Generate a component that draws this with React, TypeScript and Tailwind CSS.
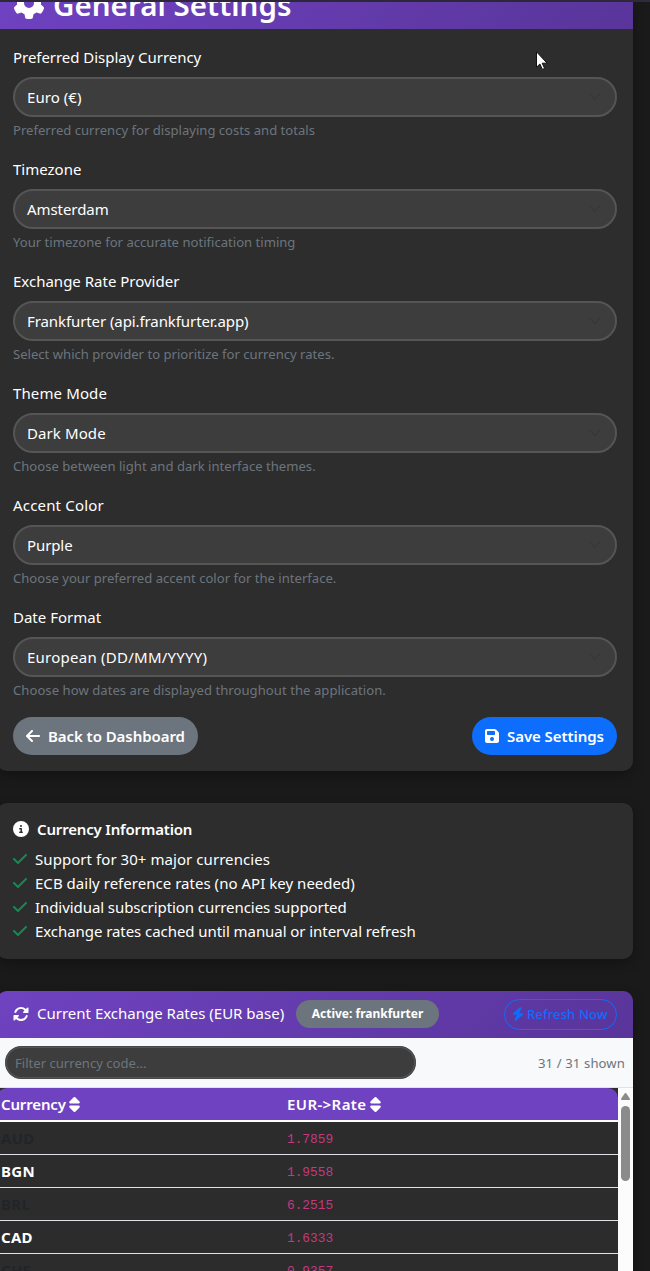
import React from "react";
import { FaArrowLeft, FaBolt, FaCheck, FaCircleInfo, FaFloppyDisk, FaGear, FaRotate, FaSort } from "react-icons/fa6";

type Field = { label: string; labelCls: string; value: string; valueCls: string; help: string; helpCls: string };

const fields: Field[] = [
  { label: "Preferred Display Currency", labelCls: "tracking-[-0.04px]", value: "Euro (€)", valueCls: "tracking-[0.06px]", help: "Preferred currency for displaying costs and totals", helpCls: "" },
  { label: "Timezone", labelCls: "", value: "Amsterdam", valueCls: "tracking-[-0.06px]", help: "Your timezone for accurate notification timing", helpCls: "" },
  { label: "Exchange Rate Provider", labelCls: "", value: "Frankfurter (api.frankfurter.app)", valueCls: "tracking-[-0.09px]", help: "Select which provider to prioritize for currency rates.", helpCls: "" },
  { label: "Theme Mode", labelCls: "tracking-[0.12px]", value: "Dark Mode", valueCls: "tracking-[0.1px]", help: "Choose between light and dark interface themes.", helpCls: "" },
  { label: "Accent Color", labelCls: "tracking-[0.18px]", value: "Purple", valueCls: "tracking-[-0.1px]", help: "Choose your preferred accent color for the interface.", helpCls: "" },
  { label: "Date Format", labelCls: "", value: "European (DD/MM/YYYY)", valueCls: "tracking-[0.25px]", help: "Choose how dates are displayed throughout the application.", helpCls: "tracking-[0.04px]" },
];

const facts = [
  { text: "Support for 30+ major currencies", cls: "tracking-[0.06px]" },
  { text: "ECB daily reference rates (no API key needed)", cls: "tracking-[0.03px]" },
  { text: "Individual subscription currencies supported", cls: "tracking-[-0.07px]" },
  { text: "Exchange rates cached until manual or interval refresh", cls: "tracking-[-0.06px]" },
];

const rates = [
  ["AUD", "1.7859"],
  ["BGN", "1.9558"],
  ["BRL", "6.2515"],
  ["CAD", "1.6333"],
  ["CHF", "0.9357"],
];

function SelectField({ f }: { f: Field }) {
  return (
    <div className="mb-4 h-24">
      <div className={`mb-2 h-6 leading-6 ${f.labelCls}`}>{f.label}</div>
      <div className="flex h-10 items-center justify-between rounded-full border-2 border-[#555555] bg-[#3d3d3d] pl-3 pr-[14px]">
        <span className={f.valueCls}>{f.value}</span>
        <svg width="12" height="12" viewBox="0 0 16 16" fill="none" stroke="#343a40" strokeWidth="2" strokeLinecap="round" strokeLinejoin="round">
          <path d="m2 5 6 6 6-6" />
        </svg>
      </div>
      <div className={`mt-[3px] h-[21px] text-[13.1px] leading-[21px] text-[#6c757d] ${f.helpCls}`}>{f.help}</div>
    </div>
  );
}

export default function App() {
  return (
    <div className="relative h-[1271px] w-[650px] overflow-hidden bg-[#1a1a1a] font-['Noto_Sans',sans-serif] text-[15px] text-white">
      <div className="h-0.5 bg-[#2f2b3c]" />
      <div className="-ml-[3px] flex w-[636px] flex-col gap-8">
        <section className="overflow-hidden rounded-b-[10px] bg-[#2d2d2d] shadow-[0_4px_12px_rgba(0,0,0,0.3)]">
          <div className="flex h-[27px] items-end overflow-hidden bg-linear-135 from-[#6f42c1] to-[#59359a] pl-4">
            <h1 className="flex h-[38px] items-center text-[29.5px] font-semibold leading-[38px]">
              <FaGear className="mb-[15px] mr-2 h-8 w-8" />
              <span className="-mt-[11px] tracking-[0.04px]">General Settings</span>
            </h1>
          </div>
          <div className="px-4 pt-4 pb-4">
            {fields.map((f) => (
              <SelectField key={f.label} f={f} />
            ))}
            <div className="flex justify-between font-semibold">
              <button className="flex h-[38px] w-[185px] items-center rounded-full bg-[#6c757d] pl-[13px]">
                <FaArrowLeft className="mr-2 h-4 w-[14px] shrink-0" />
                <span className="whitespace-nowrap tracking-[-0.06px]">Back to Dashboard</span>
              </button>
              <button className="flex h-[38px] w-[145px] items-center rounded-full bg-[#0d6efd] pl-[13px]">
                <FaFloppyDisk className="mr-2 h-4 w-[14px] shrink-0" />
                <span className="whitespace-nowrap tracking-[-0.06px]">Save Settings</span>
              </button>
            </div>
          </div>
        </section>

        <section className="rounded-[10px] bg-[#2d2d2d] p-4 shadow-[0_4px_12px_rgba(0,0,0,0.3)]">
          <h2 className="mb-2 flex h-5 items-center font-semibold">
            <FaCircleInfo className="mr-2 h-4 w-4" />
            <span className="tracking-[-0.17px]">Currency Information</span>
          </h2>
          <ul>
            {facts.map((f) => (
              <li key={f.text} className="flex h-6 items-center">
                <FaCheck className="mr-2 h-4 w-[14px] text-[#198754]" />
                <span className={f.cls}>{f.text}</span>
              </li>
            ))}
          </ul>
        </section>

        <section className="overflow-hidden rounded-[10px] bg-[#2d2d2d] shadow-[0_4px_12px_rgba(0,0,0,0.3)]">
          <div className="flex h-[47px] items-center bg-linear-135 from-[#6f42c1] to-[#59359a] px-4">
            <FaRotate className="mr-2 mb-0.5 h-4 w-4" />
            <span className="mb-0.5 w-[259px] whitespace-nowrap">Current Exchange Rates (EUR base)</span>
            <span className="mb-px flex h-7 w-[143px] items-center justify-center rounded-full bg-[#6c757d] text-[12px] font-bold">Active: frankfurter</span>
            <button className="mb-px ml-auto flex h-[31px] w-[113px] items-center rounded-full border border-[#0d6efd] pl-[7px] text-[13.1px] font-medium text-[#0d6efd]">
              <FaBolt className="mr-[3px] h-[14px] w-[12px]" />
              <span className="whitespace-nowrap pt-0.5 tracking-[0.08px]">Refresh Now</span>
            </button>
          </div>
          <div className="flex h-[50px] items-center justify-between border-b border-[#dee2e6] bg-[#f8f9fa] pl-2 pr-2 text-[13.1px] text-[#6c757d]">
            <div className="flex h-[33px] w-[411px] items-center rounded-full border-2 border-[#555555] bg-[#3d3d3d] pl-2 pt-0.5 outline-1 -outline-offset-1 outline-[#484848]">Filter currency code...</div>
            <span className="pt-0.5 tracking-[0.12px]">31 / 31 shown</span>
          </div>
          <div className="flex">
            <div className="w-[621px]">
              <div className="flex h-[34px] items-center rounded-t-[10px] border-b-2 border-white bg-[#6f42c1] pl-1 font-semibold">
                <span className="flex w-[286px] items-center tracking-[-0.15px]">
                  Currency
                  <FaSort className="ml-[3px] h-[17px] w-[11px]" />
                </span>
                <span className="flex items-center tracking-[0.4px]">
                  EUR-&gt;Rate
                  <FaSort className="ml-[3px] h-[17px] w-[11px]" />
                </span>
              </div>
              {rates.map(([code, rate], i) => (
                <div key={code} className="flex h-[33px] items-center border-b border-[#dee2e6] bg-[#2c2c2c] pl-1">
                  <span className={`w-[286px] font-bold tracking-[0.3px] ${i % 2 ? "text-white" : "text-[#212529]"}`}>{code}</span>
                  <span className="pt-1 font-['Liberation_Mono',monospace] text-[12.8px] text-[#c4397f]">{rate}</span>
                </div>
              ))}
            </div>
            <div className="flex w-[15px] flex-col items-center bg-[#fcfcfc] pt-[5px]">
              <svg width="9" height="7" viewBox="0 0 9 7" fill="#8b8b8b">
                <path d="M3.7.6a1 1 0 0 1 1.6 0L8.8 5.5Q9.2 7 8 7H1Q-.2 7 .2 5.5z" />
              </svg>
              <div className="mt-[6px] h-[75px] w-[9px] rounded-full bg-[#8b8b8b]" />
            </div>
          </div>
        </section>
      </div>
      <svg className="absolute left-[536px] top-[51px]" width="13" height="20" viewBox="0 0 13 20" fill="white" stroke="#111" strokeWidth="1">
        <path d="M.5.8v15.4l3.4-3.2 2.5 5.4 2.2-1-2.4-5.2h4.9z" />
      </svg>
    </div>
  );
}
